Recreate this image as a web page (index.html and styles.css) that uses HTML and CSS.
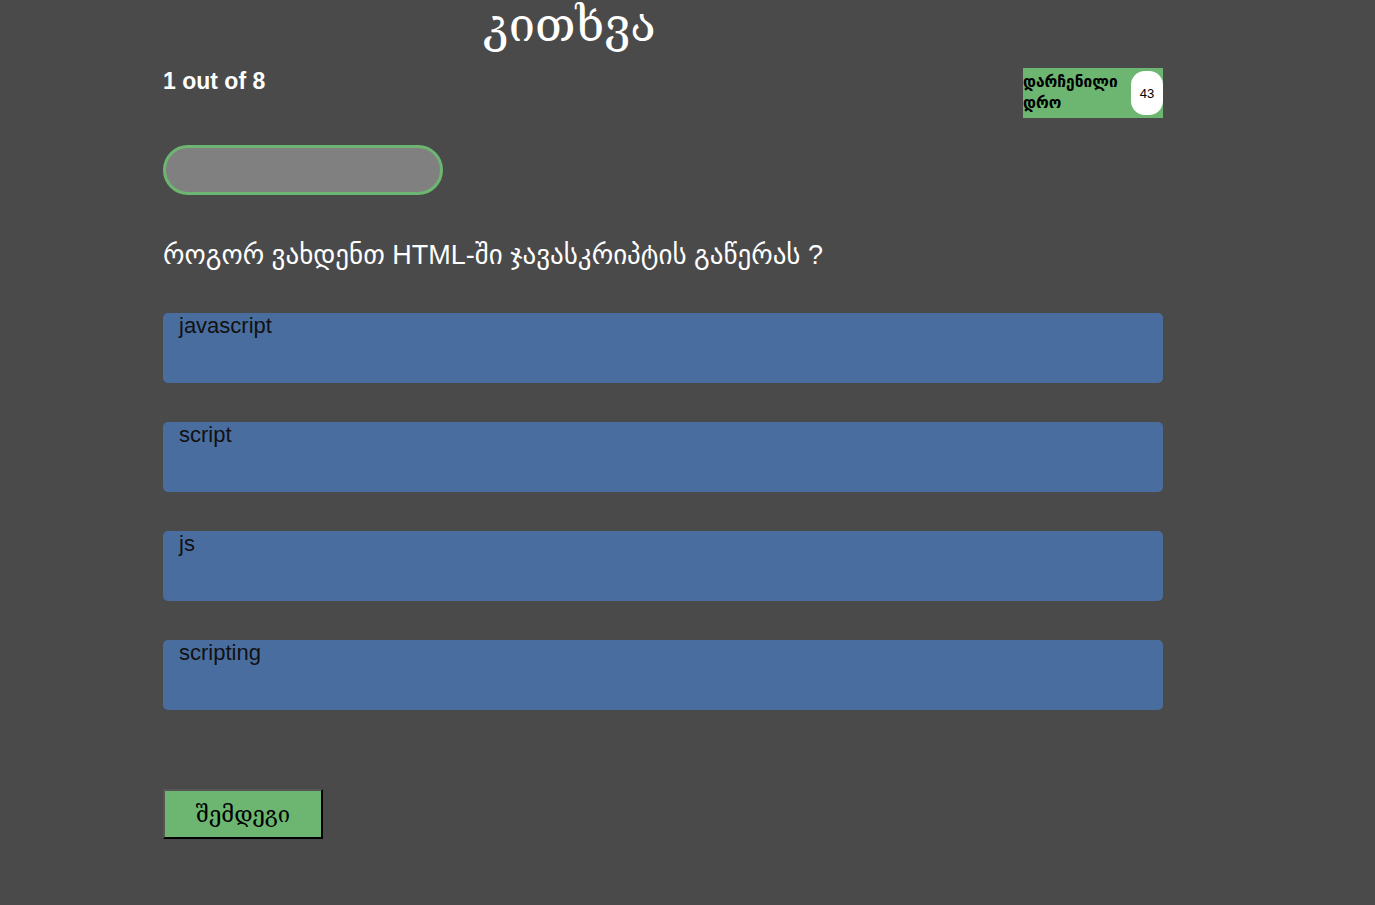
FILE: index.html
```html
<!DOCTYPE html>
<html lang="ka">
<head>
<meta charset="utf-8">
<link rel="stylesheet" href="styles.css">
</head>
<body>
<div class="page">
  <h1 class="title">კითხვა</h1>
  <div class="top-row">
    <div class="counter">1 out of 8</div>
    <div class="timer">
      <span class="timer-label">დარჩენილი დრო</span>
      <span class="timer-value">43</span>
    </div>
  </div>
  <div class="progress"></div>
  <h2 class="question">როგორ ვახდენთ HTML-ში ჯავასკრიპტის გაწერას ?</h2>
  <div class="answers">
    <div class="answer">javascript</div>
    <div class="answer">script</div>
    <div class="answer">js</div>
    <div class="answer">scripting</div>
  </div>
  <button class="next">შემდეგი</button>
</div>
</body>
</html>
```

FILE: styles.css
```css
html, body {
  margin: 0;
  padding: 0;
  background: #4a4a4a;
  font-family: "Liberation Sans", "DejaVu Sans", sans-serif;
}
.page {
  width: 1000px;
  margin-left: 163px;
  display: flex;
  flex-direction: column;
}
.title {
  margin: 0;
  padding-left: 320px;
  height: 60px;
  font-family: "DejaVu Serif", serif;
  font-weight: normal;
  font-size: 47px;
  line-height: 50px;
  color: #fff;
}
.top-row {
  display: flex;
  justify-content: space-between;
  align-items: flex-start;
  margin-top: 8px;
}
.counter {
  margin-top: 0;
  color: #fff;
  font-weight: bold;
  font-size: 23px;
}
.timer {
  width: 140px;
  height: 50px;
  background: #6db672;
  display: flex;
  align-items: center;
  justify-content: space-between;
  box-sizing: border-box;
}
.timer-label {
  font-family: "DejaVu Sans", sans-serif;
  font-weight: bold;
  font-size: 15.5px;
  line-height: 21px;
  width: 104px;
  color: #000;
}
.timer-value {
  width: 32px;
  height: 44px;
  background: #fff;
  border-radius: 14px;
  display: flex;
  align-items: center;
  justify-content: center;
  font-size: 13px;
  color: #000;
}
.progress {
  margin-top: 27px;
  width: 280px;
  height: 50px;
  box-sizing: border-box;
  border: 3px solid #6db672;
  border-radius: 25px;
  background: #808080;
}
.question {
  margin: 42px 0 0;
  font-family: "Liberation Sans", "DejaVu Sans", sans-serif;
  font-weight: normal;
  font-size: 27px;
  line-height: 36px;
  color: #fff;
}
.answers {
  margin-top: 40px;
  display: flex;
  flex-direction: column;
  gap: 39px;
}
.answer {
  height: 70px;
  box-sizing: border-box;
  background: #4a6da0;
  border-radius: 5px;
  padding: 0 16px;
  font-size: 22px;
  color: #111;
}
.next {
  margin-top: 79px;
  width: 160px;
  height: 50px;
  background: #6db672;
  border: 2px outset #555;
  font-family: "DejaVu Serif", serif;
  font-size: 22px;
  color: #000;
  cursor: pointer;
}
```
